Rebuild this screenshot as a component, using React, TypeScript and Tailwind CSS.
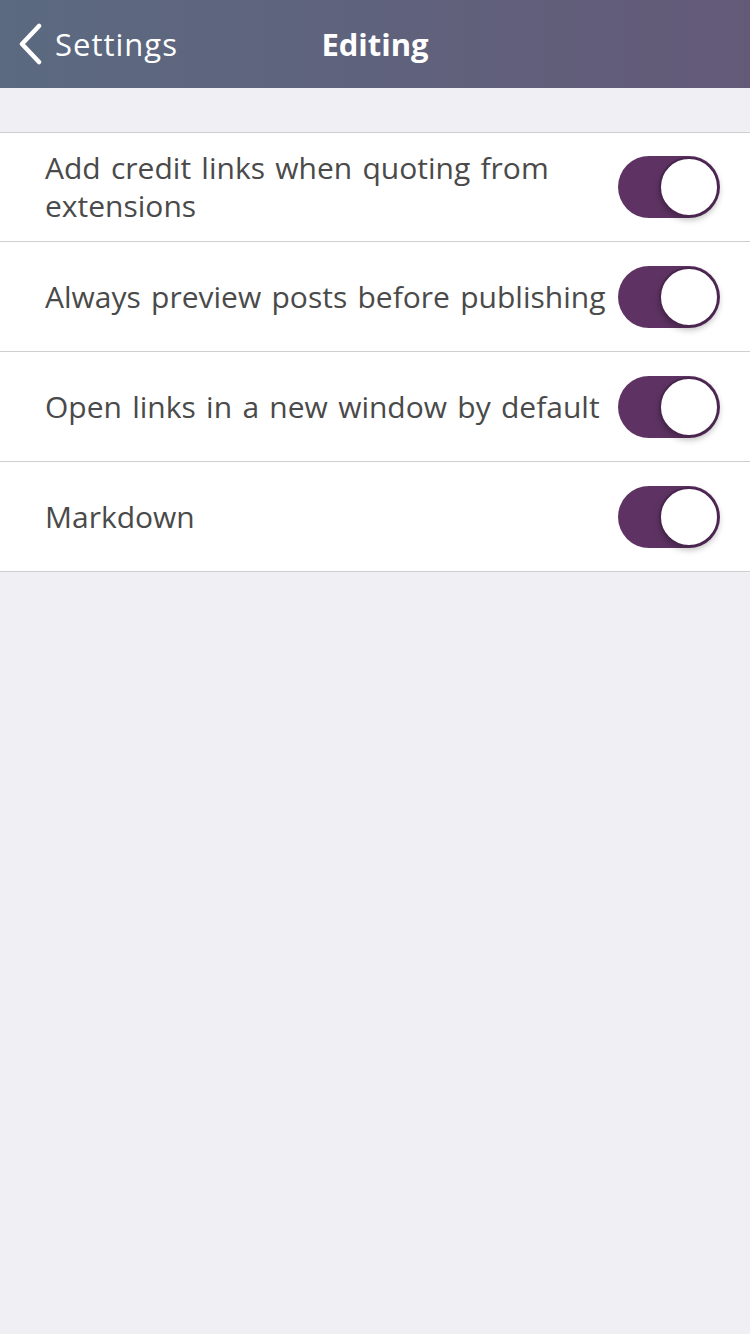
import React from "react";

const rows = [
  "Add credit links when quoting from extensions",
  "Always preview posts before publishing",
  "Open links in a new window by default",
  "Markdown",
];

function Toggle() {
  return (
    <div className="relative h-[62px] w-[102px] shrink-0 rounded-full bg-[#5e3363]">
      <div className="absolute right-[1px] top-[1px] h-[60px] w-[60px] rounded-full border-[2px] border-[#4a2550] bg-white shadow-[0_3px_6px_rgba(0,0,0,0.25)]" />
    </div>
  );
}

export default function App() {
  return (
    <div
      className="flex min-h-[1334px] w-[750px] flex-col bg-[#efeff4]"
      style={{ fontFamily: "'Open Sans', Roboto, sans-serif" }}
    >
      <div className="relative flex h-[88px] items-center bg-gradient-to-r from-[#5b6a80] to-[#635a78]">
        <div className="flex items-center pl-[17px] text-white">
          <svg width="26" height="42" viewBox="0 0 26 42" fill="none">
            <path d="M22 3 L5 21 L22 39" stroke="white" strokeWidth="4.5" strokeLinecap="round" strokeLinejoin="round" />
          </svg>
          <span className="ml-[12px] text-[31px] leading-none tracking-[1px]">Settings</span>
        </div>
        <div className="pointer-events-none absolute left-0 right-0 text-center text-[31px] font-bold leading-none text-white">
          Editing
        </div>
      </div>
      <div className="h-[44px]" />
      <div className="border-t border-b border-[#cfcfd3] bg-white">
        {rows.map((r, i) => (
          <div
            key={i}
            className={`flex items-center pl-[45px] pr-[30px] ${i > 0 ? "h-[110px] border-t border-[#cfcfd3]" : "h-[108px]"}`}
          >
            <div className="min-w-0 flex-1 text-[30px] leading-[38px] text-[#4a4a4a] [word-spacing:2.5px]">{r}</div>
            <Toggle />
          </div>
        ))}
      </div>
    </div>
  );
}
